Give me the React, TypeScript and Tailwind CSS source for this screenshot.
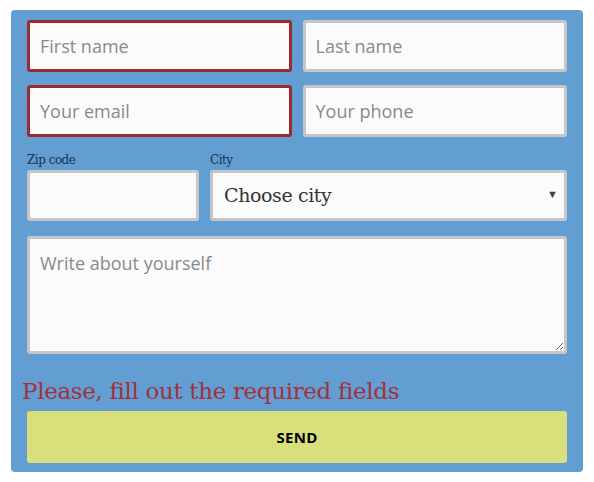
import React from 'react';

const inputBase =
  'w-full bg-[#fbfbfb] border-[3px] rounded-[3px] px-[10px] text-[18px] text-[#333] outline-none placeholder:text-[#8a8a8a] font-["Open_Sans",sans-serif]';

const App: React.FC = () => {
  return (
    <div className="w-[594px] h-[482px] bg-white pt-[10px] pl-[11px]">
      <form className="w-[572px] h-[462px] bg-[#629ed1] rounded-[4px] pt-[10px] px-[16px]">
        <div className="grid grid-cols-2 gap-x-[11px] gap-y-[13px]">
          <input className={`${inputBase} h-[52px] border-[#9b2a31]`} placeholder="First name" />
          <input className={`${inputBase} h-[52px] border-[#c4c6c9]`} placeholder="Last name" />
          <input className={`${inputBase} h-[52px] border-[#9b2a31]`} placeholder="Your email" />
          <input className={`${inputBase} h-[52px] border-[#c4c6c9]`} placeholder="Your phone" />
        </div>

        <div className="flex gap-[11px] mt-[13px]">
          <label className="w-[172px] flex flex-col">
            <span className="text-[12px] leading-[20px] text-[#1c3150] font-['DejaVu_Serif',serif] tracking-[-0.5px]">
              Zip code
            </span>
            <input className={`${inputBase} h-[51px] border-[#c4c6c9]`} />
          </label>
          <label className="flex-1 flex flex-col">
            <span className="text-[12px] leading-[20px] text-[#1c3150] font-['DejaVu_Serif',serif] tracking-[-0.5px]">
              City
            </span>
            <div className="relative">
              <select className="w-full h-[51px] appearance-none bg-[#fbfbfb] border-[3px] border-[#c4c6c9] rounded-[3px] pl-[11px] text-[19px] text-[#333] outline-none font-['DejaVu_Serif',serif] tracking-[-0.4px]">
                <option>Choose city</option>
              </select>
              <span className="absolute right-[9px] top-[16px] text-[11px] text-[#444] pointer-events-none">▼</span>
            </div>
          </label>
        </div>

        <textarea
          className="block mt-[15px] w-full h-[118px] bg-[#fbfbfb] border-[3px] border-[#c4c6c9] rounded-[3px] px-[10px] py-[12px] text-[18px] leading-[24px] text-[#333] outline-none placeholder:text-[#8a8a8a] font-['Open_Sans',sans-serif]"
          placeholder="Write about yourself"
        />

        <p className="-ml-[5px] mt-[19px] h-[38px] text-[23px] leading-[36px] text-[#a3303c] font-['DejaVu_Serif',serif] tracking-[-0.35px]">
          Please, fill out the required fields
        </p>

        <button
          type="button"
          className="w-full h-[52px] bg-[#d9e07b] rounded-[3px] text-[15px] font-bold text-black font-['Open_Sans',sans-serif] tracking-[0.3px]"
        >
          SEND
        </button>
      </form>
    </div>
  );
};

export default App;
